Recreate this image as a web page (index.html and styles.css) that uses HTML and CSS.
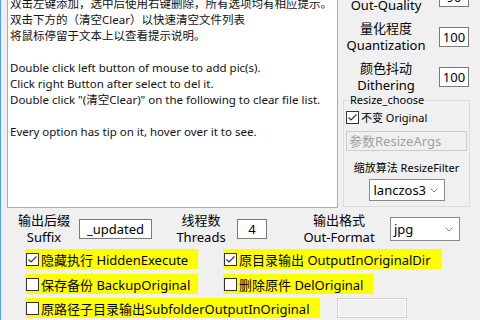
FILE: index.html
```html
<!DOCTYPE html>
<html lang="zh">

<head>
    <meta charset="UTF-8">
    <title>ImageConverter</title>

    <link rel="stylesheet" href="styles.css">
</head>

<body>
    <div class="window">
        <div class="top">
            <div class="log">
                双击左键添加，选中后使用右键删除，所有选项均有相应提示。<br>
                双击下方的（清空Clear）以快速清空文件列表<br>
                将鼠标停留于文本上以查看提示说明。<br>
                <br>
                Double click left button of mouse to add pic(s).<br>
                Click right Button after select to del it.<br>
                Double click "(清空Clear)" on the following to clear file list.<br>
                <br>
                Every option has tip on it, hover over it to see.
            </div>

            <div class="side">
                <div class="param">
                    <div class="param-label">输出质量<br>Out-Quality</div>
                    <div class="field num">90</div>
                </div>
                <div class="param">
                    <div class="param-label">量化程度<br>Quantization</div>
                    <div class="field num">100</div>
                </div>
                <div class="param">
                    <div class="param-label">颜色抖动<br>Dithering</div>
                    <div class="field num">100</div>
                </div>

                <fieldset class="group">
                    <legend>Resize_choose</legend>
                    <div class="check-line">
                        <svg class="tick" viewBox="0 0 13 13" width="13" height="13"><rect x="0.5" y="0.5" width="12" height="12" fill="#fff" stroke="#333"/><path d="M2.5 6.5 L5 9 L10.5 3.5" fill="none" stroke="#333" stroke-width="1.2"/></svg>
                        不变 Original
                    </div>
                    <div class="field args">参数ResizeArgs</div>
                    <div class="group-label">缩放算法 ResizeFilter</div>
                    <div class="select filter">
                        <span>lanczos3</span>
                        <svg width="8" height="5" viewBox="0 0 8 5"><path d="M0.5 0.5 L4 4 L7.5 0.5" fill="none" stroke="#888"/></svg>
                    </div>
                </fieldset>
            </div>
        </div>

        <div class="settings">
            <div class="set-label suffix-label">输出后缀<br>Suffix</div>
            <div class="field suffix">_updated</div>
            <div class="set-label threads-label">线程数<br>Threads</div>
            <div class="field threads">4</div>
            <div class="set-label format-label">输出格式<br>Out-Format</div>
            <div class="select format">
                <span>jpg</span>
                <svg width="8" height="5" viewBox="0 0 8 5"><path d="M0.5 0.5 L4 4 L7.5 0.5" fill="none" stroke="#888"/></svg>
            </div>
        </div>

        <div class="options">
            <div class="opt-row">
                <div class="opt opt-hidden">
                    <svg class="tick" viewBox="0 0 13 13" width="13" height="13"><rect x="0.5" y="0.5" width="12" height="12" fill="#fff" stroke="#333"/><path d="M2.5 6.5 L5 9 L10.5 3.5" fill="none" stroke="#333" stroke-width="1.2"/></svg>
                    隐藏执行 HiddenExecute
                </div>
                <div class="opt opt-outdir">
                    <svg class="tick" viewBox="0 0 13 13" width="13" height="13"><rect x="0.5" y="0.5" width="12" height="12" fill="#fff" stroke="#333"/><path d="M2.5 6.5 L5 9 L10.5 3.5" fill="none" stroke="#333" stroke-width="1.2"/></svg>
                    原目录输出 OutputInOriginalDir
                </div>
            </div>
            <div class="opt-row second">
                <div class="opt opt-backup">
                    <svg class="tick" viewBox="0 0 13 13" width="13" height="13"><rect x="0.5" y="0.5" width="12" height="12" fill="#fff" stroke="#333"/></svg>
                    保存备份 BackupOriginal
                </div>
                <div class="opt opt-del">
                    <svg class="tick" viewBox="0 0 13 13" width="13" height="13"><rect x="0.5" y="0.5" width="12" height="12" fill="#fff" stroke="#333"/></svg>
                    删除原件 DelOriginal
                </div>
            </div>
            <div class="opt-row third">
                <div class="opt opt-sub">
                    <svg class="tick" viewBox="0 0 13 13" width="13" height="13"><rect x="0.5" y="0.5" width="12" height="12" fill="#fff" stroke="#333"/></svg>
                    原路径子目录输出SubfolderOutputInOriginal
                </div>
                <div class="blank"></div>
            </div>
        </div>
    </div>
</body>

</html>
```

FILE: styles.css
```css
html, body {
    height: 320px;
    overflow: hidden;
}

body {
    margin: 0;
    box-sizing: border-box;
    border-left: 1px solid #5a9ee0;
    background-color: #f0f0f0;
    font-family: "Noto Sans", "Noto Sans CJK SC", sans-serif;
    font-size: 13px;
    color: #000;
}

.window {
    margin-top: -23px;
    padding-left: 6px;
}

.top {
    display: flex;
    align-items: flex-start;
}

.log {
    margin-top: 13px;
    width: 331px;
    height: 218px;
    box-sizing: border-box;
    padding: 5px 2px;
    background-color: #fff;
    border: 1px solid #abadb3;
    font-size: 11.5px;
    line-height: 16px;
    color: #111;
    white-space: nowrap;
    overflow: hidden;
}

.side {
    margin-left: 5px;
    width: 127px;
}

.param {
    display: flex;
    align-items: center;
    height: 40px;
}

.param-label {
    width: 86px;
    text-align: center;
    line-height: 17px;
}

.field {
    box-sizing: border-box;
    background-color: #fff;
    border: 1px solid #7a7a7a;
    text-align: center;
    line-height: 18px;
    white-space: nowrap;
}

.num {
    margin-left: 10px;
    width: 30px;
    height: 20px;
}

/* Resize group */
.group {
    margin: -4px 0 0;
    padding: 0 2px 5px;
    border: 1px solid #dcdcdc;
    min-width: 0;
}

.group legend {
    margin-left: 3px;
    padding: 0 1px;
    font-size: 11px;
    line-height: 14px;
}

.check-line {
    display: flex;
    align-items: center;
    gap: 2px;
    margin-top: 2px;
    height: 16px;
    font-size: 11px;
}

.args {
    margin-top: 6px;
    height: 20px;
    padding-left: 2px;
    background-color: #f0f0f0;
    border-color: #cccccc;
    color: #a0a0a0;
    text-align: left;
}

.group-label {
    margin-top: 9px;
    text-align: center;
    font-size: 11px;
    line-height: 16px;
}

.select {
    display: flex;
    align-items: center;
    justify-content: space-between;
    box-sizing: border-box;
    padding: 0 6px 0 4px;
    background-color: #fff;
    border: 1px solid #8a8a8a;
}

.filter {
    margin: 3px auto 0;
    width: 76px;
    height: 22px;
}

/* settings row */
.settings {
    display: flex;
    align-items: center;
    padding: 4px 0 0 3px;
}

.set-label {
    text-align: center;
    line-height: 17px;
}

.suffix-label {
    width: 68px;
}

.suffix {
    margin-left: 1px;
    width: 73px;
    height: 20px;
}

.threads-label {
    margin-left: 18px;
    width: 62px;
}

.threads {
    margin-left: 5px;
    width: 30px;
    height: 20px;
}

.format-label {
    margin-left: 29px;
    width: 86px;
}

.format {
    margin-left: 8px;
    width: 70px;
    height: 24px;
    padding-left: 3px;
}

/* option checkboxes */
.options {
    padding: 3px 0 0 18px;
}

.opt-row {
    display: flex;
    gap: 25px;
    height: 20px;
}

.opt-row.second {
    margin-top: 5px;
}

.opt-row.third {
    margin-top: 4px;
    gap: 17px;
}

.opt {
    display: flex;
    align-items: center;
    gap: 2px;
    box-sizing: border-box;
    height: 20px;
    padding-left: 1px;
    background-color: #ffff00;
    white-space: nowrap;
}

.tick {
    flex-shrink: 0;
}

.opt-hidden, .opt-backup {
    width: 173px;
}

.opt-outdir {
    width: 219px;
}

.opt-del {
    width: 150px;
}

.opt-sub {
    width: 295px;
}

.blank {
    width: 70px;
    height: 20px;
    box-sizing: border-box;
    border: 1px solid #d4d4d4;
    box-shadow: inset 0 0 0 1px #fafafa;
}
```
